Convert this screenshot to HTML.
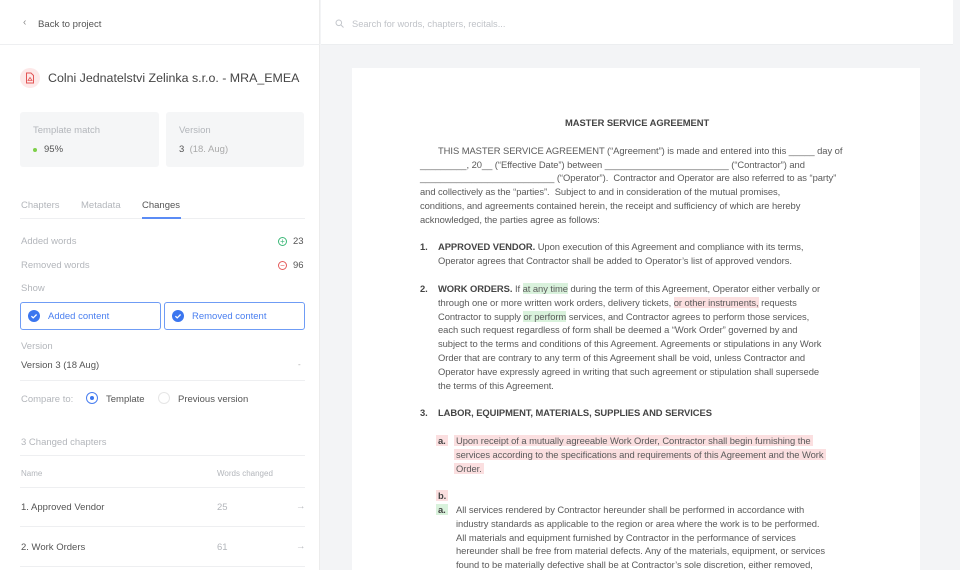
<!DOCTYPE html>
<html><head><meta charset="utf-8"><style>
*{margin:0;padding:0;box-sizing:border-box}
html,body{width:960px;height:570px;overflow:hidden}
body{background:#f3f4f6;font-family:"Liberation Sans",sans-serif;position:relative}
.a{position:absolute;white-space:nowrap}
#left{position:absolute;left:0;top:0;width:320px;height:570px;background:#fff;border-right:1px solid #ececec}
.lbl{color:#b3b6bb;font-size:9.5px}
.val{color:#555;font-size:9.5px}
.doc{font-size:9.4px;color:#5a5a5a;letter-spacing:-0.05px}
.g{background:#d9f2dc}.r{background:#fbdfe0}
b{color:#444}
</style></head><body>
<div id="left">
 <div class="a" style="left:0;top:44px;width:320px;border-top:1px solid #eeeff1"></div>
 <div class="a" style="left:23px;top:17px;color:#888;font-size:10px">‹</div>
 <div class="a val" style="left:38px;top:19px;font-size:9.6px">Back to project</div>
 <div class="a" style="left:20px;top:68px;width:20px;height:20px;border-radius:50%;background:#fde8e8"></div>
 <svg class="a" style="left:25px;top:72px" width="10" height="12" viewBox="0 0 10 12"><path d="M1.5 1h4.5l2.5 2.5V11h-7z" fill="none" stroke="#e25555" stroke-width="1"/><path d="M3 8.5l2-3 2 3z" fill="none" stroke="#e25555" stroke-width=".8"/></svg>
 <div class="a" style="left:48px;top:71px;font-size:12.4px;color:#444">Colni Jednatelstvi Zelinka s.r.o. - MRA_EMEA</div>
 <div class="a" style="left:20px;top:112px;width:139px;height:55px;background:#f5f6f7;border-radius:3px"></div>
 <div class="a" style="left:166px;top:112px;width:138px;height:55px;background:#f5f6f7;border-radius:3px"></div>
 <div class="a lbl" style="left:33px;top:125px">Template match</div>
 <div class="a" style="left:33px;top:148px;width:4px;height:4px;border-radius:50%;background:#7ed04a"></div>
 <div class="a val" style="left:44px;top:144px">95%</div>
 <div class="a lbl" style="left:179px;top:125px">Version</div>
 <div class="a val" style="left:179px;top:144px">3 <span style="color:#aaa">&nbsp;(18. Aug)</span></div>
 <div class="a lbl" style="left:21px;top:200px">Chapters</div>
 <div class="a lbl" style="left:81px;top:200px">Metadata</div>
 <div class="a val" style="left:142px;top:200px">Changes</div>
 <div class="a" style="left:20px;top:218px;width:285px;border-top:1px solid #eeeff1"></div>
 <div class="a" style="left:142px;top:217px;width:39px;height:2px;background:#5b8cf5"></div>
 <div class="a lbl" style="left:21px;top:236px">Added words</div>
 <div class="a" style="left:278px;top:237px;width:9px;height:9px;border-radius:50%;border:1px solid #3cb878;color:#3cb878;font-size:8px;line-height:7px;text-align:center">+</div>
 <div class="a val" style="left:293px;top:236px">23</div>
 <div class="a lbl" style="left:21px;top:260px">Removed words</div>
 <div class="a" style="left:278px;top:261px;width:9px;height:9px;border-radius:50%;border:1px solid #e45b5b;color:#e45b5b;font-size:8px;line-height:7px;text-align:center">−</div>
 <div class="a val" style="left:293px;top:260px">96</div>
 <div class="a lbl" style="left:21px;top:283px">Show</div>
 <div class="a" style="left:20px;top:302px;width:141px;height:28px;border:1px solid #6f9cf5;border-radius:3px"></div>
 <div class="a" style="left:164px;top:302px;width:141px;height:28px;border:1px solid #6f9cf5;border-radius:3px"></div>
 <svg class="a" style="left:28px;top:310px" width="12" height="12"><circle cx="6" cy="6" r="6" fill="#3b76ef"/><path d="M3.4 6.2l1.8 1.7 3.4-3.4" stroke="#fff" stroke-width="1.3" fill="none"/></svg>
 <svg class="a" style="left:172px;top:310px" width="12" height="12"><circle cx="6" cy="6" r="6" fill="#3b76ef"/><path d="M3.4 6.2l1.8 1.7 3.4-3.4" stroke="#fff" stroke-width="1.3" fill="none"/></svg>
 <div class="a" style="left:48px;top:311px;font-size:9.5px;color:#4a7ff0">Added content</div>
 <div class="a" style="left:192px;top:311px;font-size:9.5px;color:#4a7ff0">Removed content</div>
 <div class="a lbl" style="left:21px;top:341px">Version</div>
 <div class="a val" style="left:21px;top:360px">Version 3 (18 Aug)</div>
 <div class="a" style="left:298px;top:360px;color:#aaa;font-size:8px">-</div>
 <div class="a" style="left:20px;top:380px;width:285px;border-top:1px solid #eeeff1"></div>
 <div class="a lbl" style="left:21px;top:394px">Compare to:</div>
 <div class="a" style="left:86px;top:392px;width:12px;height:12px;border-radius:50%;border:1px solid #4a7ff0"></div>
 <div class="a" style="left:90px;top:396px;width:4px;height:4px;border-radius:50%;background:#3b76ef"></div>
 <div class="a val" style="left:106px;top:394px">Template</div>
 <div class="a" style="left:158px;top:392px;width:12px;height:12px;border-radius:50%;border:1px solid #e6e6e6"></div>
 <div class="a val" style="left:178px;top:394px">Previous version</div>
 <div class="a lbl" style="left:21px;top:437px">3 Changed chapters</div>
 <div class="a" style="left:20px;top:455px;width:285px;border-top:1px solid #eeeff1"></div>
 <div class="a lbl" style="left:21px;top:469px;font-size:8px">Name</div>
 <div class="a lbl" style="left:217px;top:469px;font-size:8px">Words changed</div>
 <div class="a" style="left:20px;top:487px;width:285px;border-top:1px solid #eeeff1"></div>
 <div class="a val" style="left:21px;top:502px">1. Approved Vendor</div>
 <div class="a lbl" style="left:217px;top:502px">25</div>
 <div class="a lbl" style="left:296px;top:501px">→</div>
 <div class="a" style="left:20px;top:526px;width:285px;border-top:1px solid #eeeff1"></div>
 <div class="a val" style="left:21px;top:542px">2. Work Orders</div>
 <div class="a lbl" style="left:217px;top:542px">61</div>
 <div class="a lbl" style="left:296px;top:541px">→</div>
 <div class="a" style="left:20px;top:566px;width:285px;border-top:1px solid #eeeff1"></div>
</div>
<div class="a" style="left:321px;top:0;width:632px;height:45px;background:#fff;border-bottom:1px solid #eceef0"></div>
<svg class="a" style="left:335px;top:19px" width="9" height="9"><circle cx="3.8" cy="3.8" r="2.8" stroke="#c4c7cc" fill="none"/><path d="M6 6l2.5 2.5" stroke="#c4c7cc"/></svg>
<div class="a" style="left:352px;top:19px;font-size:9.3px;color:#c0c3c8">Search for words, chapters, recitals...</div>
<div class="a" style="left:352px;top:68px;width:568px;height:502px;background:#fff"></div>
<div class="doc">
<div class="a" style="left:565px;top:117px;font-weight:bold;color:#444">MASTER SERVICE AGREEMENT</div>
<div class="a" style="left:438px;top:145px">THIS MASTER SERVICE AGREEMENT (“Agreement”) is made and entered into this _____ day of</div>
<div class="a" style="left:420px;top:159px">_________, 20__ (“Effective Date”) between ________________________ (“Contractor”) and</div>
<div class="a" style="left:420px;top:172px">__________________________ (“Operator”).&nbsp; Contractor and Operator are also referred to as “party”</div>
<div class="a" style="left:420px;top:186px">and collectively as the “parties”.&nbsp; Subject to and in consideration of the mutual promises,</div>
<div class="a" style="left:420px;top:200px">conditions, and agreements contained herein, the receipt and sufficiency of which are hereby</div>
<div class="a" style="left:420px;top:214px">acknowledged, the parties agree as follows:</div>
<div class="a" style="left:420px;top:241px"><b>1.</b></div>
<div class="a" style="left:438px;top:241px"><b>APPROVED VENDOR.</b> Upon execution of this Agreement and compliance with its terms,</div>
<div class="a" style="left:438px;top:255px">Operator agrees that Contractor shall be added to Operator’s list of approved vendors.</div>
<div class="a" style="left:420px;top:283px"><b>2.</b></div>
<div class="a" style="left:438px;top:283px"><b>WORK ORDERS.</b> If <span class="g">at any time</span> during the term of this Agreement, Operator either verbally or</div>
<div class="a" style="left:438px;top:297px">through one or more written work orders, delivery tickets, <span class="r">or other instruments,</span> requests</div>
<div class="a" style="left:438px;top:311px">Contractor to supply <span class="g">or perform</span> services, and Contractor agrees to perform those services,</div>
<div class="a" style="left:438px;top:324px">each such request regardless of form shall be deemed a “Work Order” governed by and</div>
<div class="a" style="left:438px;top:338px">subject to the terms and conditions of this Agreement. Agreements or stipulations in any Work</div>
<div class="a" style="left:438px;top:352px">Order that are contrary to any term of this Agreement shall be void, unless Contractor and</div>
<div class="a" style="left:438px;top:366px">Operator have expressly agreed in writing that such agreement or stipulation shall supersede</div>
<div class="a" style="left:438px;top:380px">the terms of this Agreement.</div>
<div class="a" style="left:420px;top:407px"><b>3.</b></div>
<div class="a" style="left:438px;top:407px"><b>LABOR, EQUIPMENT, MATERIALS, SUPPLIES AND SERVICES</b></div>
<div class="a r" style="left:436px;top:435px;padding:0 2px"><b>a.</b></div>
<div class="a r" style="left:454px;top:435px;padding:0 2px">Upon receipt of a mutually agreeable Work Order, Contractor shall begin furnishing the</div>
<div class="a r" style="left:454px;top:449px;padding:0 2px">services according to the specifications and requirements of this Agreement and the Work</div>
<div class="a r" style="left:454px;top:463px;padding:0 2px">Order.</div>
<div class="a r" style="left:436px;top:490px;padding:0 2px"><b>b.</b></div>
<div class="a g" style="left:436px;top:504px;padding:0 2px"><b>a.</b></div>
<div class="a" style="left:456px;top:504px">All services rendered by Contractor hereunder shall be performed in accordance with</div>
<div class="a" style="left:456px;top:518px">industry standards as applicable to the region or area where the work is to be performed.</div>
<div class="a" style="left:456px;top:532px">All materials and equipment furnished by Contractor in the performance of services</div>
<div class="a" style="left:456px;top:545px">hereunder shall be free from material defects. Any of the materials, equipment, or services</div>
<div class="a" style="left:456px;top:559px">found to be materially defective shall be at Contractor’s sole discretion, either removed,</div>
</div>
</body></html>
